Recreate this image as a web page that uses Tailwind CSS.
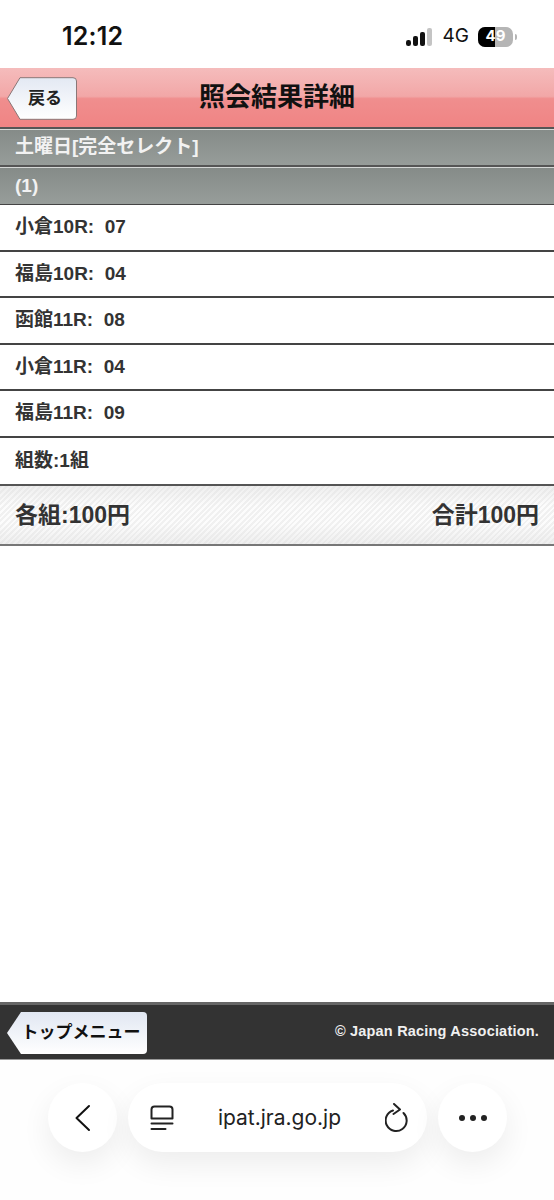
<!DOCTYPE html>
<html lang="ja">
<head>
    <meta charset="UTF-8">
    <meta name="viewport" content="width=device-width, initial-scale=1.0">
    <title>照会結果詳細</title>
    <script src="https://cdn.jsdelivr.net/npm/@tailwindcss/browser@4"></script>
</head>
<body class="bg-white">
<div class="w-[554px] h-[1200px] overflow-hidden flex flex-col bg-white [font-family:'Liberation_Sans','Noto_Sans_CJK_JP',sans-serif]">

    <!-- Status bar -->
    <div class="h-[68px] shrink-0 flex items-center justify-between pl-[62px] pr-[37px] pt-[5px]">
        <span class="text-[25px] font-semibold text-[#111] [font-family:Inter,sans-serif] tracking-[0.2px]">12:12</span>
        <div class="flex items-center">
            <svg width="28" height="20" viewBox="0 0 28 20" class="mr-[10px]">
                <rect x="1" y="13" width="5" height="6" rx="2.2" fill="#111"/>
                <rect x="8" y="9" width="5" height="10" rx="2" fill="#111"/>
                <rect x="15" y="5" width="5" height="14" rx="2" fill="#111"/>
                <rect x="22" y="1" width="5" height="18" rx="2" fill="#c4c4c4"/>
            </svg>
            <span class="text-[19px] text-[#111] [font-family:Inter,sans-serif] mr-[9px]">4G</span>
            <div class="relative w-[35px] h-[20px] rounded-[7px] overflow-hidden bg-[#b5b5b5] flex">
                <div class="w-[17px] h-full bg-black"></div>
                <span class="absolute inset-0 flex items-center justify-center text-[15px] font-bold text-white [font-family:Inter,sans-serif]">49</span>
            </div>
            <div class="w-[2px] h-[6px] ml-[2px] rounded-r-sm bg-[#b5b5b5]"></div>
        </div>
    </div>

    <!-- Header -->
    <div class="relative h-[61px] shrink-0 flex items-center justify-center border-b-2 border-[#555] bg-[linear-gradient(#f5bcbc_0%,#f2a7a7_48%,#f08e8e_52%,#f08484_100%)]">
        <a class="absolute left-[7px] top-[9px] w-[70px] h-[43px] flex items-center justify-center pl-[6px]">
            <svg width="70" height="43" viewBox="0 0 70 43" class="absolute inset-0">
                <defs>
                    <linearGradient id="backBtn" x1="0" y1="0" x2="0" y2="1">
                        <stop offset="0" stop-color="#e3e9f3"/>
                        <stop offset="1" stop-color="#ffffff"/>
                    </linearGradient>
                </defs>
                <path d="M0.5 21.5 L13 0.7 H66 Q69.5 0.7 69.5 4 V39 Q69.5 42.3 66 42.3 H13 Z" fill="url(#backBtn)" stroke="#8a7777" stroke-width="1"/>
            </svg>
            <span class="relative text-[17px] font-bold text-[#222]">戻る</span>
        </a>
        <h1 class="text-[26px] font-bold text-[#111]">照会結果詳細</h1>
    </div>

    <!-- Section bars -->
    <div class="h-[38px] shrink-0 flex items-center px-[15px] text-[19px] font-bold text-[#f2f2f2] border-t border-[#d5d8d6] border-b-2 border-b-[#555] bg-[linear-gradient(#858b88,#979d9a)]">土曜日[完全セレクト]</div>
    <div class="h-[38px] shrink-0 flex items-center px-[15px] text-[19px] font-bold text-[#f2f2f2] border-t border-[#d5d8d6] border-b border-b-[#444] bg-[linear-gradient(#858b88,#979d9a)]">(1)</div>

    <!-- Result rows -->
    <div class="h-[47px] shrink-0 flex items-center px-[15px] text-[19px] font-bold text-[#333] border-b-2 border-[#444]">小倉10R:&nbsp;&nbsp;07</div>
    <div class="h-[46px] shrink-0 flex items-center px-[15px] text-[19px] font-bold text-[#333] border-b-2 border-[#444]">福島10R:&nbsp;&nbsp;04</div>
    <div class="h-[47px] shrink-0 flex items-center px-[15px] text-[19px] font-bold text-[#333] border-b-2 border-[#444]">函館11R:&nbsp;&nbsp;08</div>
    <div class="h-[46px] shrink-0 flex items-center px-[15px] text-[19px] font-bold text-[#333] border-b-2 border-[#444]">小倉11R:&nbsp;&nbsp;04</div>
    <div class="h-[47px] shrink-0 flex items-center px-[15px] text-[19px] font-bold text-[#333] border-b-2 border-[#444]">福島11R:&nbsp;&nbsp;09</div>
    <div class="h-[48px] shrink-0 flex items-center px-[15px] text-[19px] font-bold text-[#333] border-b-2 border-[#555]">組数:1組</div>

    <!-- Totals -->
    <div class="relative h-[60px] shrink-0 border-b-2 border-[#777] bg-[repeating-linear-gradient(135deg,#efefef_0px,#efefef_2px,#fcfcfc_2px,#fcfcfc_4px)]">
        <div class="h-full flex items-center justify-between px-[15px] text-[23px] font-bold text-[#333] bg-[linear-gradient(rgba(225,225,225,0.5),rgba(255,255,255,0.1)_35%,rgba(255,255,255,0.1)_65%,rgba(225,225,225,0.5))]">
            <span>各組:100円</span>
            <span>合計100円</span>
        </div>
    </div>

    <div class="flex-1"></div>

    <!-- Footer -->
    <div class="h-[58px] shrink-0 relative flex items-center justify-end pr-[15px] bg-[#333] border-t-[3px] border-b border-t-[#666] border-b-[#999]">
        <a class="absolute left-[7px] top-[7px] w-[140px] h-[42px] flex items-center justify-center pl-[8px]">
            <svg width="140" height="42" viewBox="0 0 140 42" class="absolute inset-0">
                <defs>
                    <linearGradient id="topBtn" x1="0" y1="0" x2="0" y2="1">
                        <stop offset="0" stop-color="#e1e7f2"/>
                        <stop offset="1" stop-color="#ffffff"/>
                    </linearGradient>
                </defs>
                <path d="M0 21 L14 0 H136 Q140 0 140 4 V38 Q140 42 136 42 H14 Z" fill="url(#topBtn)"/>
            </svg>
            <span class="relative text-[17px] font-bold text-[#111] whitespace-nowrap">トップメニュー</span>
        </a>
        <span class="text-[14.5px] font-bold text-[#f0f0f0] tracking-[0.2px]">© Japan Racing Association.</span>
    </div>

    <!-- Browser toolbar -->
    <div class="h-[140px] shrink-0 flex items-start gap-[11px] pl-[48px] pt-[23px] bg-[#fefefe]">
        <div class="w-[69px] h-[69px] rounded-full bg-white shadow-[0_12px_30px_rgba(0,0,0,0.07)] flex items-center justify-center">
            <svg width="20" height="28" viewBox="0 0 20 28" fill="none" stroke="#111" stroke-width="2" stroke-linecap="round" stroke-linejoin="round"><path d="M16 2 L3.5 14 L16 26"/></svg>
        </div>
        <div class="w-[299px] h-[69px] rounded-full bg-white shadow-[0_12px_30px_rgba(0,0,0,0.07)] flex items-center pl-[22px] pr-[18px]">
            <svg width="24" height="26" viewBox="0 0 24 26" fill="none" stroke="#222" stroke-width="2" stroke-linecap="round">
                <path d="M4.5 1.5 H19.5 Q22.5 1.5 22.5 4.5 V13.5 H1.5 V4.5 Q1.5 1.5 4.5 1.5 Z" stroke-linejoin="round"/>
                <path d="M1.5 18.5 H22.5"/>
                <path d="M1.5 24 H15.5"/>
            </svg>
            <span class="flex-1 text-center text-[21px] text-[#222] [font-family:Inter,sans-serif]">ipat.jra.go.jp</span>
            <svg width="24" height="30" viewBox="0 0 24 30" fill="none" stroke="#222" stroke-width="2" stroke-linecap="round" stroke-linejoin="round">
                <path d="M8 7.5 A10.5 10.5 0 1 0 18.5 10"/>
                <path d="M9 1 L15 6.5 L8.5 11"/>
            </svg>
        </div>
        <div class="w-[69px] h-[69px] rounded-full bg-white shadow-[0_12px_30px_rgba(0,0,0,0.07)] flex items-center justify-center gap-[5px]">
            <span class="w-[6px] h-[6px] rounded-full bg-[#222]"></span>
            <span class="w-[6px] h-[6px] rounded-full bg-[#222]"></span>
            <span class="w-[6px] h-[6px] rounded-full bg-[#222]"></span>
        </div>
    </div>
</div>
</body>
</html>
